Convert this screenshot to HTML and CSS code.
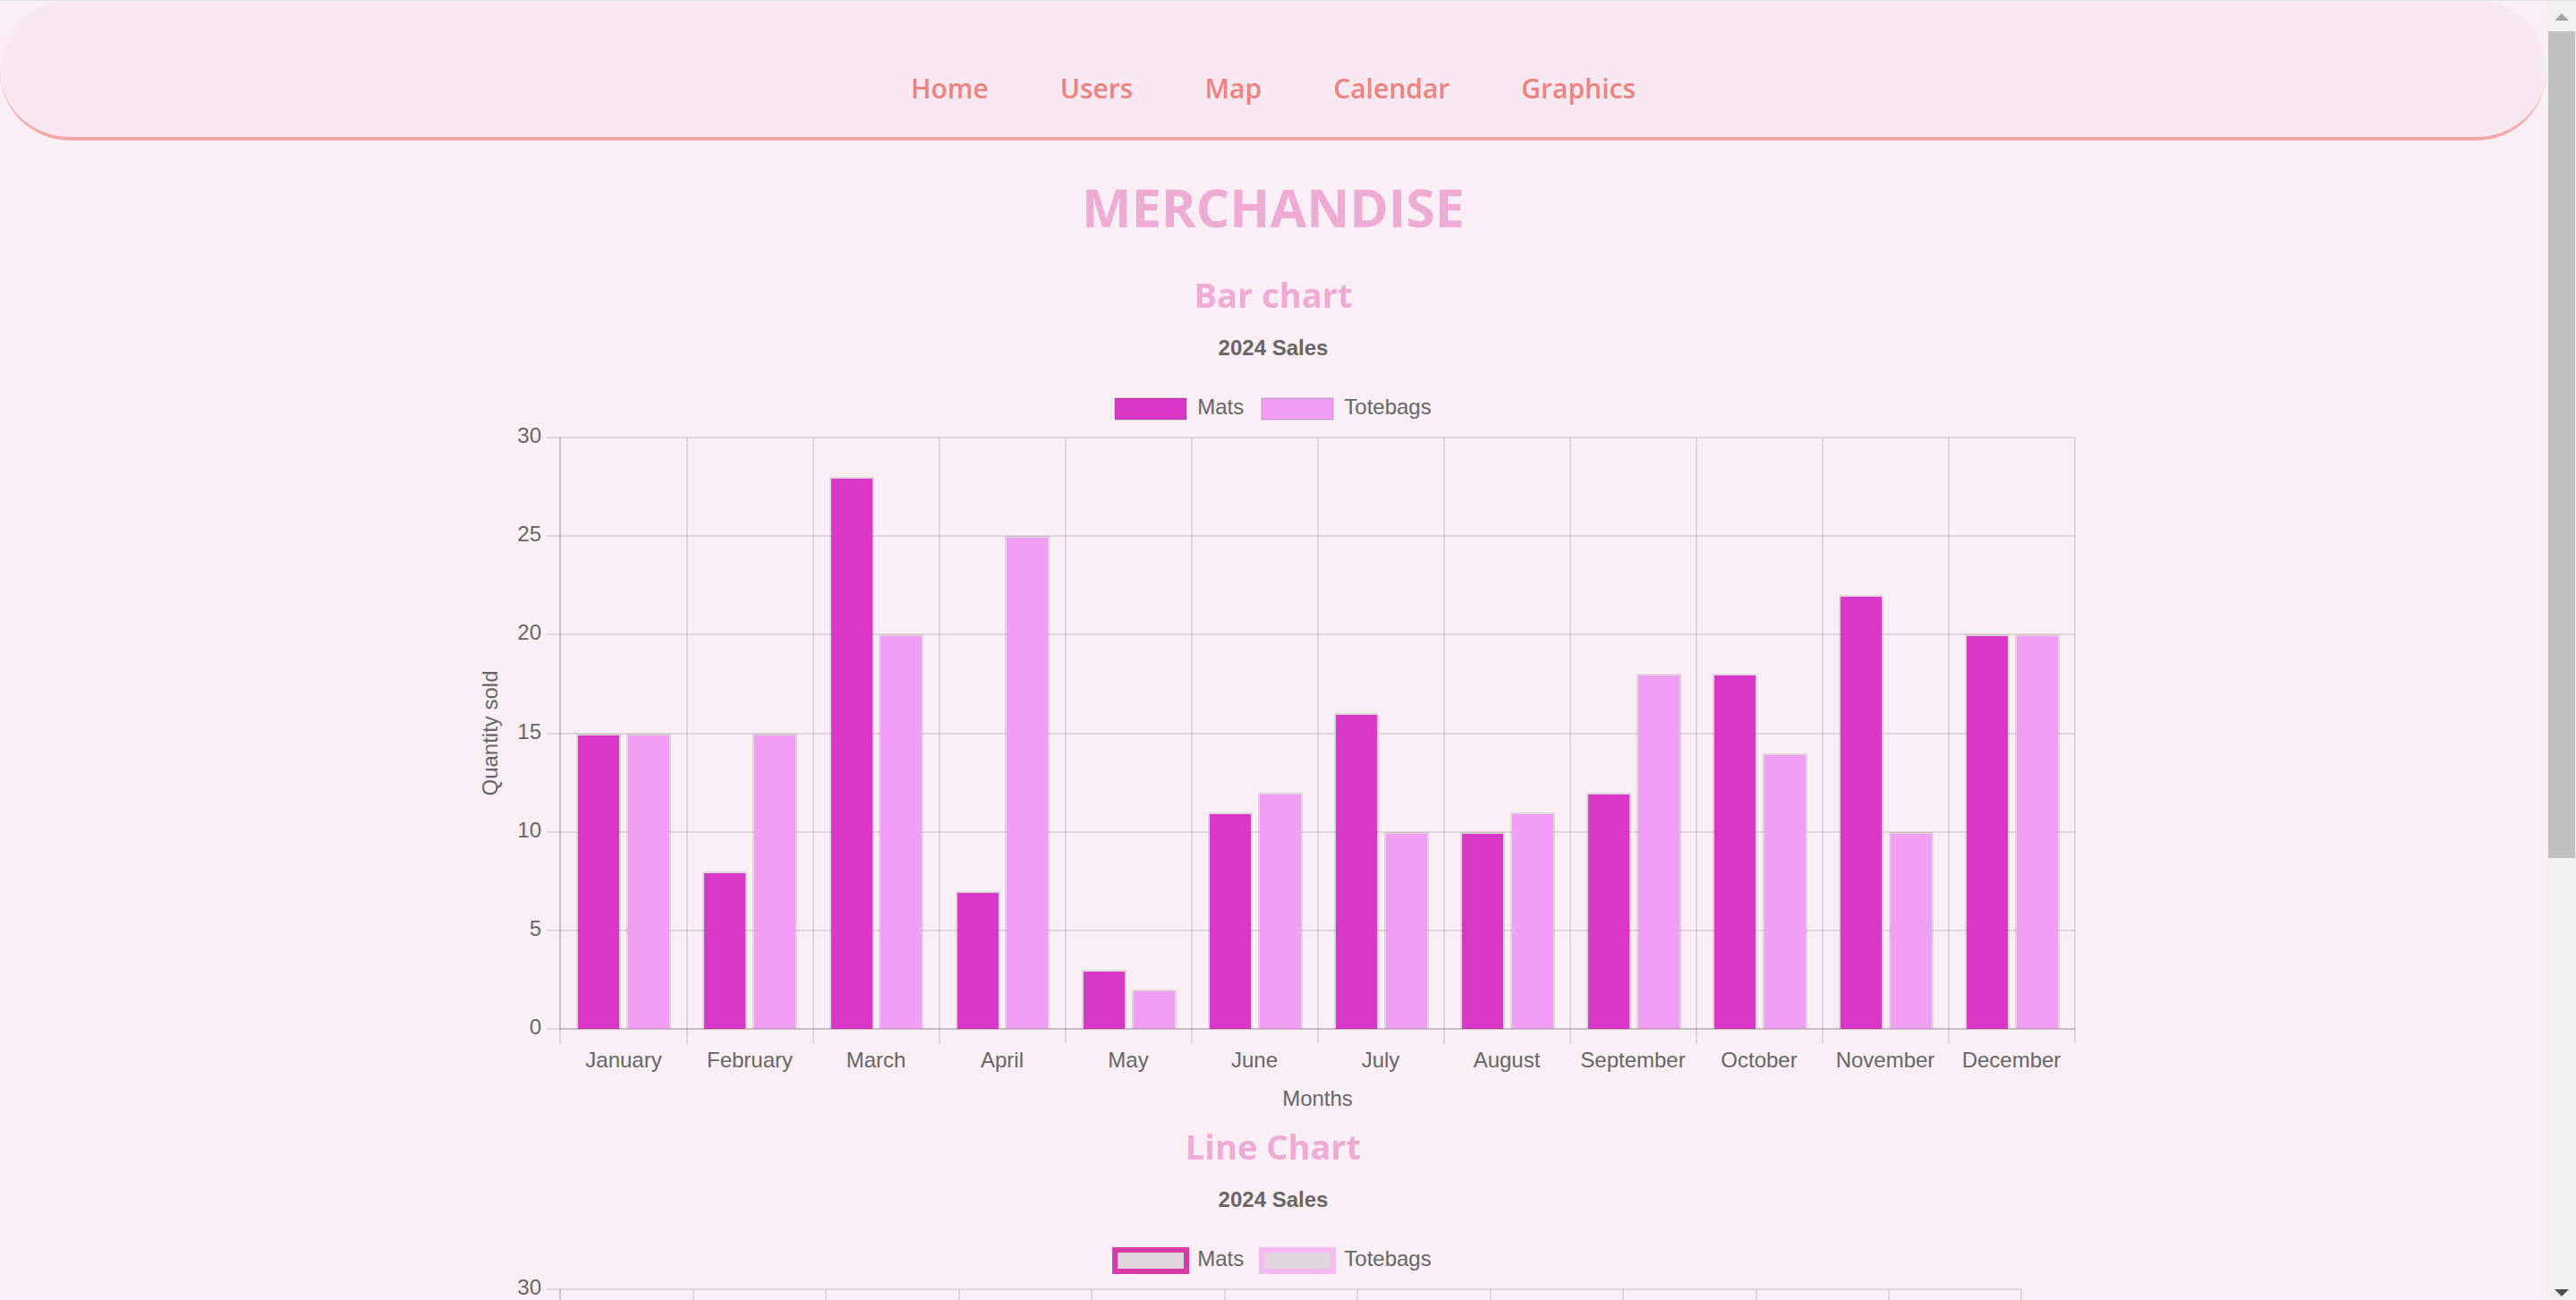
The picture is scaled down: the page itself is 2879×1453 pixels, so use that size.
FILE: index.html
```
<!DOCTYPE html>
<html lang="en">
<head>
<meta charset="utf-8">
<meta name="viewport" content="width=device-width, initial-scale=1">
<title>Merchandise</title>
<link rel="stylesheet" href="styles.css">
</head>
<body>
<div class="content">
  <header class="header">
    <nav class="nav">
      <a href="#home">Home</a>
      <a href="#users">Users</a>
      <a href="#map">Map</a>
      <a href="#calendar">Calendar</a>
      <a href="#graphics">Graphics</a>
    </nav>
  </header>
  <main class="main">
    <h1 class="page-title">MERCHANDISE</h1>
    <section class="section">
      <h2 class="section-title">Bar chart</h2>
      <figure class="chart">
        <figcaption class="chart-title">2024 Sales</figcaption>
        <div class="legend">
          <span class="legend-item"><i class="swatch bar-mats"></i>Mats</span>
          <span class="legend-item"><i class="swatch bar-totebags"></i>Totebags</span>
        </div>
        <svg class="plot" data-type="bar" role="img" aria-label="Bar chart of 2024 sales"></svg>
      </figure>
    </section>
    <section class="section">
      <h2 class="section-title">Line Chart</h2>
      <figure class="chart">
        <figcaption class="chart-title">2024 Sales</figcaption>
        <div class="legend">
          <span class="legend-item"><i class="swatch line-mats"></i>Mats</span>
          <span class="legend-item"><i class="swatch line-totebags"></i>Totebags</span>
        </div>
        <svg class="plot" data-type="line" role="img" aria-label="Line chart of 2024 sales"></svg>
      </figure>
    </section>
  </main>
</div>
<div class="scrollbar" aria-hidden="true">
  <svg class="arrow arrow-up" viewBox="0 0 16 8"><path d="M0 8L8 0L16 8Z"/></svg>
  <div class="track"><div class="thumb"></div></div>
  <svg class="arrow arrow-down" viewBox="0 0 16 8"><path d="M0 0L8 8L16 0Z"/></svg>
</div>
<script src="charts.js"></script>
</body>
</html>
```
FILE: styles.css
```
* {
  box-sizing: border-box;
}

body {
  margin: 0;
  height: 100vh;
  display: flex;
  overflow: hidden;
  background: #faeff5;
  border-top: 1px solid #e0e0e0;
  font-family: "Segoe UI", "Open Sans", "Noto Sans", sans-serif;
}

.content {
  flex: 1;
  min-width: 0;
  overflow-x: hidden;
  overflow-y: auto;
  scrollbar-width: none;
}

.header {
  padding: 68px 40px 24px;
  background: #f7e8f1;
  border-bottom: 4px solid #f2a9a8;
  border-radius: 80px;
}

.nav {
  display: flex;
  justify-content: center;
  gap: 80px;
  font-size: 30px;
  line-height: 60px;
  font-weight: 600;
}

.nav a {
  color: #ee827f;
  text-decoration: none;
}

.page-title {
  margin: 30px 0 26px;
  font-size: 59px;
  line-height: 88px;
  font-weight: 700;
  text-align: center;
  color: #eeacd4;
}

.section-title {
  margin: 0;
  font-size: 38px;
  line-height: 56px;
  font-weight: 700;
  text-align: center;
  color: #eeacd4;
}

.chart {
  width: 63%;
  margin: 0 auto;
  padding-top: 18px;
  font-family: "Liberation Sans", Arial, sans-serif;
  font-size: 24px;
  line-height: 28px;
  color: #666;
}

.chart-title {
  font-weight: 700;
  text-align: center;
}

.legend {
  display: flex;
  justify-content: center;
  gap: 20px;
  margin: 38px 0 0;
}

.legend-item {
  display: flex;
  gap: 12px;
}

.swatch {
  width: 80px;
  height: 24px;
  margin-top: 4px;
  outline: 2px solid rgba(0, 0, 0, 0.1);
  outline-offset: -1px;
}

.bar-mats {
  background: #d938c6;
}

.bar-totebags {
  background: #f19ff5;
}

.line-mats,
.line-totebags {
  background: #e1d6db;
  outline-width: 6px;
  outline-offset: -3px;
}

.line-mats {
  outline-color: #d93ba6;
}

.line-totebags {
  outline-color: #f5baf0;
}

.plot {
  display: block;
  width: 100%;
  height: 784px;
  overflow: visible;
}

.plot text {
  fill: #666;
}

.grid {
  stroke: rgba(0, 0, 0, 0.1);
  stroke-width: 2px;
}

.edge {
  fill: none;
  stroke: rgba(0, 0, 0, 0.1);
  stroke-width: 2px;
}

.mats {
  fill: #d938c6;
}

.totebags {
  fill: #f19ff5;
}

.plot .line {
  fill: none;
  stroke-width: 6px;
}

.line.mats {
  stroke: #d93ba6;
}

.line.totebags {
  stroke: #f5baf0;
}

.scrollbar {
  width: 33px;
  display: flex;
  flex-direction: column;
  align-items: center;
  padding: 14px 0 4px;
  background: #f1f1f1;
}

.arrow {
  width: 16px;
  height: 8px;
}

.arrow-up {
  fill: #a3a3a3;
}

.arrow-down {
  fill: #505050;
}

.track {
  flex: 1;
  width: 30px;
  padding: 12px 0 16px;
}

.thumb {
  height: 66.5%;
  background: #c1c1c1;
}
```
FILE: charts.js
```
const months = ["January", "February", "March", "April", "May", "June", "July",
  "August", "September", "October", "November", "December"];
const sales = {
  mats: [15, 8, 28, 7, 3, 11, 16, 10, 12, 18, 22, 20],
  totebags: [15, 15, 20, 25, 2, 12, 10, 11, 18, 14, 10, 20]
};
const MAX = 30;
const STEP = 5;

function add(svg, name, attrs, text) {
  const el = document.createElementNS("http://www.w3.org/2000/svg", name);
  for (const key in attrs) el.setAttribute(key, attrs[key]);
  if (text !== undefined) el.textContent = text;
  svg.appendChild(el);
}

function draw(svg) {
  const isBar = svg.dataset.type === "bar";
  const left = 99;
  const top = 20;
  const bottom = top + 661;
  const right = Math.round(svg.clientWidth) - (isBar ? 1 : 61);
  const pitch = (right - left) / (isBar ? months.length : months.length - 1);
  const yOf = value => Math.round(bottom - value * (bottom - top) / MAX);
  const line = (x1, y1, x2, y2) => add(svg, "line", { class: "grid", x1, y1, x2, y2 });
  svg.replaceChildren();

  for (let value = 0; value <= MAX; value += STEP) {
    const y = yOf(value);
    line(left - 15, y, right, y);
    add(svg, "text", { x: left - 21, y: y + 6, "text-anchor": "end" }, value);
  }
  const count = isBar ? months.length : months.length - 1;
  for (let i = 0; i <= count; i++) {
    const x = Math.min(Math.ceil(left + i * pitch), right);
    line(x, top, x, bottom + 16);
  }
  months.forEach((month, i) => {
    const x = Math.round(left + (i + (isBar ? 0.5 : 0)) * pitch);
    add(svg, "text", { x, y: bottom + 43, "text-anchor": "middle" }, month);
  });

  Object.keys(sales).forEach((name, series) => {
    if (isBar) {
      const width = Math.round(pitch * 0.355);
      sales[name].forEach((value, i) => {
        const x = Math.round(left + pitch * (i + 0.13 + 0.396 * series));
        const y = yOf(value);
        add(svg, "rect", { class: name, x: x + 2, y: y + 2, width: width - 4, height: bottom - y - 2 });
        add(svg, "path", { class: "edge", d: `M${x + 1} ${bottom}V${y + 1}H${x + width - 1}V${bottom}` });
      });
    } else {
      const points = sales[name].map((value, i) => Math.round(left + i * pitch) + "," + yOf(value));
      add(svg, "polyline", { class: "line " + name, points: points.join(" ") });
    }
  });

  line(left, top, left, bottom);
  line(left, bottom, right, bottom);

  const middle = (top + bottom) / 2;
  add(svg, "text", { x: (left + right) / 2, y: bottom + 86, "text-anchor": "middle" }, "Months");
  add(svg, "text", {
    "text-anchor": "middle",
    transform: `translate(29 ${middle}) rotate(-90)`
  }, "Quantity sold");
}

function drawAll() {
  document.querySelectorAll(".plot").forEach(draw);
}

drawAll();
window.addEventListener("resize", drawAll);
```
